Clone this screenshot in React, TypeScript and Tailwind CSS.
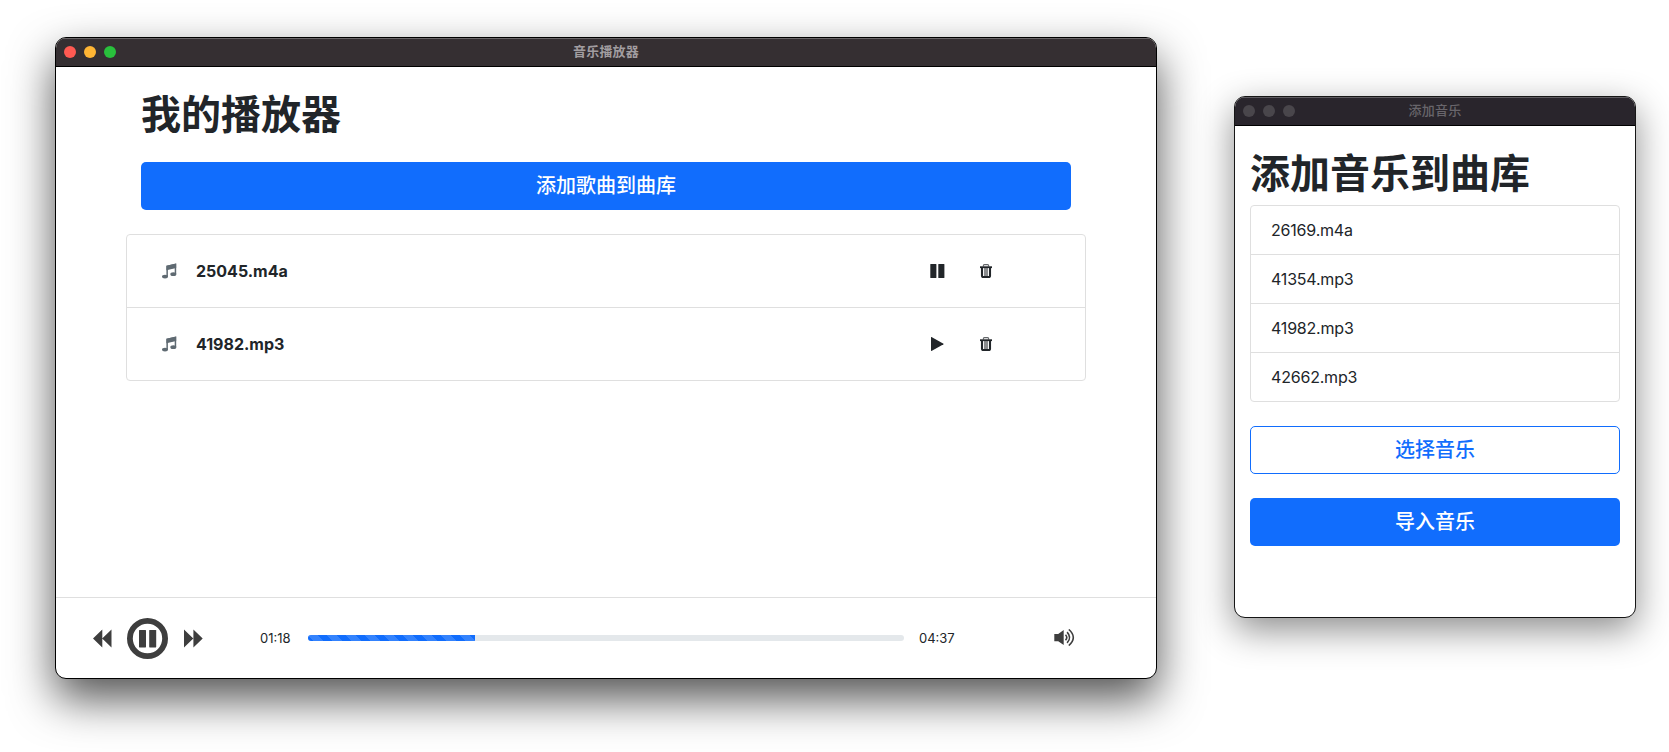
import React from "react";

const cjk = "font-['Inter','Noto_Sans_CJK_SC',sans-serif]";

function TitleBar({ title, active }: { title: string; active: boolean }) {
  return (
    <header
      className={
        active
          ? "grid h-[29px] shrink-0 grid-cols-[1fr_auto_1fr] items-center border-b border-black bg-[#352f32] px-2 text-[13px] font-bold text-[#a19da0] shadow-[inset_0_1px_0_#6b6769]"
          : "grid h-[29px] shrink-0 grid-cols-[1fr_auto_1fr] items-center border-b border-black bg-[#29252c] px-2 text-[13px] font-medium text-[#68656b] shadow-[inset_0_1px_0_#5e5b60]"
      }
    >
      <div className="flex gap-2">
        <span className={active ? "size-3 rounded-full bg-[#ff5a52]" : "size-3 rounded-full bg-[#49464b]"} />
        <span className={active ? "size-3 rounded-full bg-[#ffb534]" : "size-3 rounded-full bg-[#49464b]"} />
        <span className={active ? "size-3 rounded-full bg-[#29c03c]" : "size-3 rounded-full bg-[#49464b]"} />
      </div>
      <span className="pb-0.5 leading-none tracking-[0.2px]">{title}</span>
    </header>
  );
}

function NotesIcon() {
  return (
    <svg className="h-4 w-[15px]" viewBox="0 0 15 16" fill="#5f6a72">
      <path d="M4.4 2.7 14.2.4v10.8H12.7V4.7L5.9 6.3v7.4H4.4z" />
      <path d="M4.4 2.7 14.2.4v4.6L4.4 7.2z" />
      <ellipse cx="3" cy="13.6" rx="3" ry="1.9" />
      <ellipse cx="11.3" cy="11.2" rx="3" ry="1.9" />
    </svg>
  );
}

function PauseIcon() {
  return (
    <svg className="h-[14px] w-[15px]" viewBox="0 0 15 14" fill="#212529">
      <rect x="0.3" y="0" width="6.1" height="14" rx="0.5" />
      <rect x="8.3" y="0" width="6.1" height="14" rx="0.5" />
    </svg>
  );
}

function PlayIcon() {
  return (
    <svg className="h-[14px] w-[15px]" viewBox="0 0 15 14" fill="#212529">
      <path d="M1 .5C1 .1 1.2 0 1.5.1L13.5 6.7q.4.3 0 .6L1.5 13.9C1.2 14 1 13.9 1 13.5z" />
    </svg>
  );
}

function TrashIcon() {
  return (
    <svg className="h-[14px] w-3" viewBox="0 0 12 14" fill="none" stroke="#212529">
      <path d="M3.4 2.6V1.4Q3.6.6 4.5.6h3q.9 0 1.1.8v1.2" strokeWidth="1.1" opacity=".7" />
      <path d="M0 3.2h12" strokeWidth="1.8" />
      <path d="M2 3.6v8.5q0 .9.9.9h6.2q.9 0 .9-.9V3.6" strokeWidth="2.1" />
      <path d="M4 4h4v8H4z" fill="#212529" stroke="none" opacity=".4" />
      <path d="M5 4v8M7 4v8" strokeWidth=".7" opacity=".6" />
    </svg>
  );
}

function RewindIcon() {
  return (
    <svg className="h-[19px] w-[19px]" viewBox="0 0 19 19" fill="#3e3e3e">
      <path d="M9.3.4v18.2L0 9.5zM18.5.4v18.2L9.2 9.5z" />
    </svg>
  );
}

function ForwardIcon() {
  return (
    <svg className="h-[19px] w-[19px]" viewBox="0 0 19 19" fill="#3e3e3e">
      <path d="M0 .4v18.2l9.3-9.1zM9.4.4v18.2l9.3-9.1z" />
    </svg>
  );
}

function PauseCircleIcon() {
  return (
    <svg className="size-[41px]" viewBox="0 0 41 41" fill="#3e3e3e">
      <circle cx="20.5" cy="20.5" r="17.6" fill="none" stroke="#3e3e3e" strokeWidth="5.8" />
      <rect x="12" y="12" width="7" height="17.4" rx="0.6" />
      <rect x="22.2" y="12" width="7" height="17.4" rx="0.6" />
    </svg>
  );
}

function VolumeIcon() {
  return (
    <svg className="mb-px h-[17px] w-[21px]" viewBox="0 0 21 17" fill="none" stroke="#3e3e3e">
      <path d="M.3 5h3.9L9.7.9v15.2L4.2 12.2H.3z" fill="#3e3e3e" stroke="none" />
      <path d="M11.5 5.8q2.6 2.7 0 5.4" strokeWidth="1.6" />
      <path d="M13.1 3.1q5 5.4 0 10.8" strokeWidth="1.6" />
      <path d="M14.8.5q9 8 0 16" strokeWidth="1.6" />
    </svg>
  );
}

function TrackRow({ name, playing }: { name: string; playing: boolean }) {
  return (
    <li className="flex h-[73px] items-center border-b border-[#dfdfdf] pl-[35px] last:h-[72px] last:border-b-0">
      <NotesIcon />
      <b className="ml-[19px] w-[734px] text-base font-bold">{name}</b>
      {playing ? <PauseIcon /> : <PlayIcon />}
      <span className="ml-[35px] flex">
        <TrashIcon />
      </span>
    </li>
  );
}

function PlayerWindow() {
  return (
    <section className="absolute left-[55px] top-[37px] flex h-[642px] w-[1102px] flex-col overflow-hidden rounded-[11px] border border-black bg-white shadow-[0_20px_45px_rgba(0,0,0,0.68)]">
      <TitleBar title="音乐播放器" active />
      <main className="flex-1 px-[70px] pt-6">
        <h1 className="px-[15px] text-[40px] font-bold leading-12">我的播放器</h1>
        <div className="mt-[23px] px-[15px]">
          <button className="h-12 w-full rounded-[5px] bg-[#116dfd] text-xl font-medium text-white">添加歌曲到曲库</button>
        </div>
        <ul className="mt-6 rounded border border-[#dfdfdf]">
          <TrackRow name="25045.m4a" playing />
          <TrackRow name="41982.mp3" playing={false} />
        </ul>
      </main>
      <footer className="flex h-[81px] items-center border-t border-[#dfdfdf] pl-[37px] text-[13px]">
        <RewindIcon />
        <span className="ml-[15px]">
          <PauseCircleIcon />
        </span>
        <span className="ml-4">
          <ForwardIcon />
        </span>
        <span className="ml-[57px] w-12 pt-px">01:18</span>
        <div className="flex h-1.5 w-[596px] overflow-hidden rounded-[3px] bg-[#e4e8eb]">
          <div className="w-[28%] bg-[#116dfd] bg-[linear-gradient(45deg,rgba(255,255,255,0.15)_25%,transparent_25%,transparent_50%,rgba(255,255,255,0.15)_50%,rgba(255,255,255,0.15)_75%,transparent_75%,transparent)] bg-size-[19px_19px]" />
        </div>
        <span className="ml-[15px] w-[135px] pt-px">04:37</span>
        <VolumeIcon />
      </footer>
    </section>
  );
}

const files = ["26169.m4a", "41354.mp3", "41982.mp3", "42662.mp3"];

function ImportWindow() {
  return (
    <section className="absolute left-[1234px] top-[96px] flex h-[522px] w-[402px] flex-col overflow-hidden rounded-[11px] border border-[#161616] bg-white shadow-[0_12px_36px_rgba(0,0,0,0.45)]">
      <TitleBar title="添加音乐" active={false} />
      <main className="px-[15px] pt-6">
        <h1 className="text-[40px] font-bold leading-12">添加音乐到曲库</h1>
        <ul className="mt-[7px] rounded border border-[#dfdfdf]">
          {files.map((file) => (
            <li
              key={file}
              className="flex h-[49px] items-center border-b border-[#dfdfdf] px-5 text-base tracking-[-0.2px] last:h-12 last:border-b-0"
            >
              {file}
            </li>
          ))}
        </ul>
        <button className="mt-6 h-12 w-full rounded-[5px] border border-[#116dfd] text-xl font-medium text-[#116dfd]">
          选择音乐
        </button>
        <button className="mt-6 h-12 w-full rounded-[5px] bg-[#116dfd] text-xl font-medium text-white">导入音乐</button>
      </main>
    </section>
  );
}

export default function App() {
  return (
    <div className={`relative h-[752px] w-[1669px] overflow-hidden bg-white text-[#212529] ${cjk}`}>
      <ImportWindow />
      <PlayerWindow />
    </div>
  );
}
